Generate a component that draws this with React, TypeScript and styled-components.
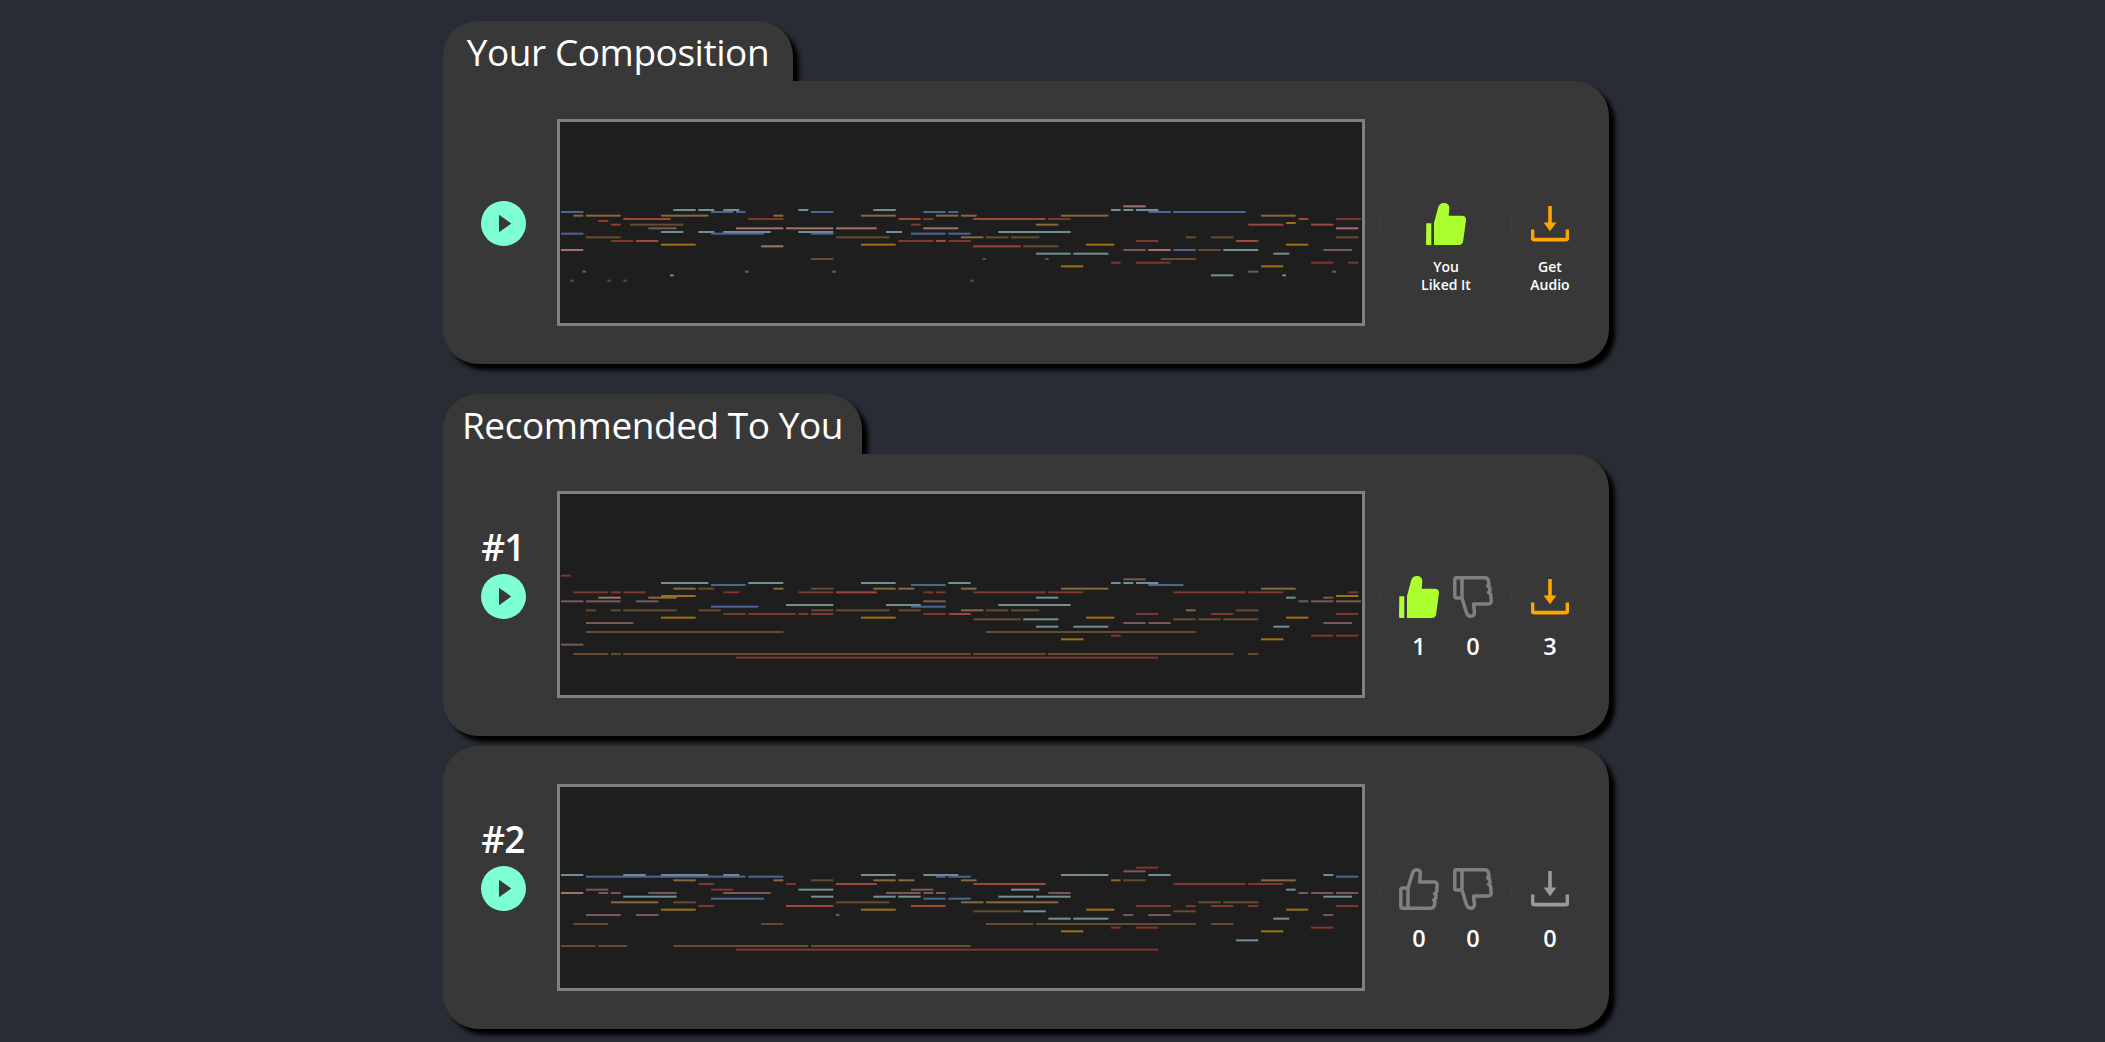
import React from "react";
import styled, { createGlobalStyle } from "styled-components";

const Global = createGlobalStyle`
  * { box-sizing: border-box; }
  html, body { margin: 0; background: #282c34; }
  body { font-family: "Open Sans", "Noto Sans", "Liberation Sans", sans-serif; color: #fff; }
`;

const Page = styled.main`
  width: 1166px;
  margin-left: 443px;
  padding: 21px 0 13px;
`;
const Section = styled.section`
  margin-bottom: 30px;
  &:last-child { margin-bottom: 0; }
`;
const Tab = styled.h2<{ $width: number }>`
  width: ${(p) => p.$width}px;
  height: 60px;
  margin: 0;
  background: #383838;
  border-radius: 35px 35px 0 0;
  box-shadow: 6px 6px 4px #000;
  font-size: 37px;
  font-weight: 400;
  line-height: 62px;
  letter-spacing: -0.45px;
  text-align: center;
  white-space: nowrap;
`;
const Panel = styled.article<{ $first?: boolean }>`
  position: relative;
  display: flex;
  align-items: center;
  height: 282.67px;
  padding-left: 6px;
  margin-top: 10px;
  background: #383838;
  border-radius: 35px;
  box-shadow: 6px 6px 4px #000;
  ${(p) => p.$first && "margin-top: 0; border-top-left-radius: 0;"}
`;
const Lead = styled.div`
  align-self: flex-start;
  width: 108px;
  padding-top: 67px;
  display: flex;
  flex-direction: column;
  align-items: center;
`;
const Rank = styled.div`
  height: 53px;
  font-size: 37px;
  font-weight: 600;
  line-height: 52px;
  letter-spacing: -0.8px;
`;
const PlayButton = styled.button`
  width: 45px;
  height: 45px;
  padding: 0;
  border: 0;
  border-radius: 50%;
  background: #7fffd4;
  display: flex;
`;
const Roll = styled.div`
  flex: none;
  width: 808px;
  height: 207px;
  border: 3px solid #808080;
  background: #1e1e1e;
`;
const RollSvg = styled.svg`
  display: block;
  filter: blur(0.45px);
`;
const Actions = styled.div`
  align-self: flex-start;
  margin-left: 29px;
  padding-top: 122px;
  display: flex;
`;
const ActionGroup = styled.div`
  width: 104px;
  display: flex;
  flex-direction: column;
  align-items: center;
`;
const Votes = styled.div`
  display: flex;
  justify-content: center;
`;
const Stat = styled.div`
  width: 54px;
  display: flex;
  flex-direction: column;
  align-items: center;
`;
const IconSlot = styled.div`
  height: 42px;
  display: flex;
  align-items: center;
  justify-content: center;
`;
const Caption = styled.div`
  margin-top: 13px;
  font-size: 14px;
  font-weight: 600;
  line-height: 18px;
  text-align: center;
  white-space: pre-line;
`;
const Count = styled.div`
  margin-top: 15px;
  font-size: 23.5px;
  font-weight: 600;
  line-height: 26px;
  text-align: center;
`;
const Rule = styled.i<{ $left: number }>`
  position: absolute;
  left: ${(p) => p.$left}px;
  top: 136px;
  width: 1px;
  height: 15px;
  background: #3e3e3e;
`;

const palette: Record<string, string> = {
  b: "#4f6d9e",
  t: "#7d989b",
  o: "#96703f",
  O: "#6b5030",
  r: "#ab4a3c",
  R: "#893a30",
  p: "#ab7a70",
  P: "#80605a",
  g: "#a9780f",
  v: "#ad3d1c",
};

type Block = { ox: number; oy: number; rows: string };

const parse = (blocks: Block[]) =>
  blocks.flatMap(({ ox, oy, rows }) =>
    rows
      .trim()
      .split("\n")
      .flatMap((line) => {
        const [y, ...rest] = line.trim().split(" ");
        return rest.map((n) => {
          const [a, b] = n.slice(1).split("-").map(Number);
          return { c: palette[n[0]], x: a / 3 + ox, w: (b - a) / 3, y: Number(y) / 3 + oy };
        });
      }),
  );

const notesOne = parse([
  {
    ox: -10,
    oy: 68,
    rows: `60 t370-437 t445-493 t520-568 t745-775 t970-1037
66 b33-100 b483-550 b558-587 b783-850 b1120-1187 b1195-1200
77 o70-100 o108-212 o333-475 o670-700 o933-1037 o1158-1200
87 r220-362 R595-700 r1045-1112 R1120-1150
93 v145-175
104 v183-212 O240-400 R1083-1112
115 P295-380 p558-700 p708-850 p858-980 p1120-1200
126 t333-400 t445-493 t520-662 t745-850 t1008-1056
131 b33-100 b483-642 b783-850 b1083-1187 b1195-1200
142 O108-212 O858-1018
153 R183-250 r258-325 R1045-1150 r1158-1187 R1195-1200
164 g333-437 g933-1037
169 p633-700
180 p33-100
207 O783-850
245 P97-108 P585-596 P847-858
256 t360-371
272 O60-71 O172-183 O220-231`,
  },
  {
    ox: 390,
    oy: 68,
    rows: `49 p520-587
60 t483-512 t520-550 t558-625
66 b0-25 b595-662 b670-887
77 o0-25 o33-80 o333-475 o933-1037
87 r70-287 R295-362 r1045-1075 R1158-1233
99 g1008-1037
104 o258-325 r895-1000 r1083-1150
115 p0-25 p1158-1225
126 t145-362
131 b0-62
142 o33-100 O108-175 O183-268 O708-737 O783-850 O1158-1225
153 R0-62 R558-625 r858-925
164 g408-493 g1008-1075
169 r70-212 O220-325
180 P520-587 p595-662 b670-737 O745-812 t820-925 P1120-1206
191 t258-362 t370-475 t970-1018
207 O97-108 O285-296 O633-737
218 R483-512 R558-662 R1083-1150 R1195-1225
229 g333-400 g933-1000
245 P895-925 P1147-1158
256 t783-850 t997-1008
272 O60-71`,
  },
]);

const notesTwo = parse([
  {
    ox: -10,
    oy: 66,
    rows: `47 R33-62
69 t333-475 t595-700 t933-1037 t1195-1200
75 b483-587 b1083-1187
86 o370-437 O445-493 o670-700 O783-850 o970-1037 o1045-1093
97 R70-175 R183-212 R220-287 R520-568 R745-850 r858-980 R1120-1150 R1158-1187
108 g333-437
113 p145-212 o295-380
124 P33-100 P108-212 P258-325 P1120-1187
135 t708-850 t1008-1112
140 b483-625 b1083-1187
151 O108-137 O183-212 O220-380 O445-512 O783-850 O858-1018 O1045-1112
162 R520-587 R595-737 R745-775 R783-850 R1120-1187 R1195-1200
173 g333-437 g933-1037
189 P108-250
216 O108-700
254 P33-100
282 O70-175 O183-212 O220-1200
293 R558-1200`,
  },
  {
    ox: 390,
    oy: 66,
    rows: `58 P520-587
69 t0-62 t483-512 t520-550 t558-625
75 b595-700
86 o33-80 o333-475 o933-1037
97 R70-287 R295-400 R670-887 R895-1000 R1195-1225
108 g1158-1225
113 t258-325 t1008-1037 P1120-1150
124 P1045-1075 P1083-1150 P1158-1233
135 t145-362
151 o33-100 O108-175 O183-268 o708-737 O858-925
162 r0-62 R558-625 R783-850 R1158-1225
173 g408-493 g1008-1075
178 O70-212 t220-325 O670-737 O745-812 O820-925
189 P520-587 P595-662 P1120-1206
200 t258-325 t370-475 t970-1018
216 O108-737
227 R483-512 R1083-1150 R1158-1225
238 g333-400 g933-1000
282 O0-62 O70-287 O295-850 O895-925
293 R0-625`,
  },
]);

const notesThree = parse([
  {
    ox: -10,
    oy: 63,
    rows: `75 t33-100 t220-287 t333-475 t520-568 t933-1037 t1120-1200
80 b108-587 b595-700 b1158-1187 b1195-1200
91 o370-437 o670-700 O783-850 o970-1037 o1045-1093
102 R445-493 R708-737 r858-980
119 P108-175 R483-550 t745-850 P1083-1150
129 p33-100 P145-175 P183-212 P295-380 P520-662 P1008-1112 P1120-1150 P1158-1187
140 t220-380 t783-850 t970-1037 t1045-1112
146 b483-642 b1120-1187 b1195-1200
157 o183-325 O370-437 O858-1018
168 R445-493 r708-850 r1083-1187
179 g333-437 g933-1037
195 P108-212 P258-325 P858-868
222 O70-175 O633-700
288 O33-137 O145-231 O370-775 O783-1200
299 R558-1200`,
  },
  {
    ox: 390,
    oy: 63,
    rows: `53 R558-625
64 P520-587
75 t0-25 t333-475 t595-662 t1120-1150
80 b0-62 b1158-1225
91 o33-80 o483-512 O520-587 o933-1037
102 r70-287 R670-887 R895-1000
119 t183-268 t1008-1037
129 P295-362 P1045-1075 P1083-1150 P1158-1225
140 t145-250 t258-362 t1120-1206
146 b0-62
157 o33-100 o108-325 O745-812 O820-925
168 R558-662 R708-737 R783-850 R895-925 R1158-1225
179 g408-493 g1008-1075
184 O70-212 t220-287 O670-737
195 P520-550 P595-662 P1120-1150
206 t295-362 t370-475 t970-1018
222 O108-250 O258-737 O783-850
233 R483-512 R558-625 R1083-1150
244 g333-400 g933-1000
271 t858-925
288 O0-62
299 R0-625`,
  },
]);

type Note = { c: string; x: number; w: number; y: number };

const PianoRoll = ({ notes }: { notes: Note[] }) => (
  <Roll>
    <RollSvg width="802" height="201" viewBox="0 0 802 201">
      {notes.map((n, i) => (
        <rect key={i} x={n.x} y={n.y - 1} width={n.w} height={2} fill={n.c} opacity={0.92} />
      ))}
    </RollSvg>
  </Roll>
);

const Play = () => (
  <PlayButton aria-label="Play">
    <svg width="45" height="45" viewBox="0 0 45 45">
      <path d="M18 13.7 L30.3 22.5 L18 31.3 Z" fill="#383838" />
    </svg>
  </PlayButton>
);

const handFilled =
  "M0.3 20.3 H5.3 V42 H1.3 Q0 42 0 40.7 Z M8 42 V20 L12 5 Q13.3 0 17.7 0 Q23.6 0 23.3 5.5 L22.7 12.7 H36 Q40.3 12.7 40 17.3 L37.2 37.7 Q36.6 42 32.7 42 Z";
const handOutline =
  "M9 40 V20 H3.7 Q1.8 20 1.8 21.9 V38.3 Q1.8 40.2 3.7 40.2 H31.5 Q35 40.2 35.5 36.8 L36 33.4 L34.6 32.2 L36.6 30.6 L37 27.2 L35.6 25.6 L37.6 24 L38.2 17.5 Q38.4 14 35 14 H20.6 L21.4 6 Q21.6 1.8 18 1.8 Q14.6 1.8 13.4 5.4 L9 20";

const Thumb = ({ down, filled }: { down?: boolean; filled?: boolean }) => (
  <svg width="41" height="42" viewBox="0 0 41 42">
    <g transform={down ? "translate(0 42) scale(1 -1)" : undefined}>
      {filled ? (
        <path d={handFilled} fill="#adff2f" />
      ) : (
        <path d={handOutline} fill="none" stroke="#808080" strokeWidth="3.5" strokeLinejoin="round" />
      )}
    </g>
  </svg>
);

const Download = ({ color }: { color: string }) => (
  <svg width="38" height="36" viewBox="0 0 38 36">
    <path d="M19 0 V18" stroke={color} strokeWidth="3.6" fill="none" />
    <path d="M12.6 16.6 H25.4 L19 25.2 Z" fill={color} />
    <path
      d="M1.5 23.6 V31.8 Q1.5 33.6 3.5 33.6 H34.5 Q36.5 33.6 36.5 31.8 V23.6"
      stroke={color}
      strokeWidth="3.7"
      fill="none"
    />
  </svg>
);

const Rules = () => (
  <>
    <Rule $left={98} />
    <Rule $left={937} />
    <Rule $left={1068} />
  </>
);

const Recommended = ({
  rank,
  notes,
  up,
  down,
  saved,
  liked,
  fetched,
  first,
}: {
  rank: string;
  notes: Note[];
  up: number;
  down: number;
  saved: number;
  liked?: boolean;
  fetched?: boolean;
  first?: boolean;
}) => (
  <Panel $first={first}>
    <Rules />
    <Lead>
      <Rank>{rank}</Rank>
      <Play />
    </Lead>
    <PianoRoll notes={notes} />
    <Actions>
      <ActionGroup>
        <Votes>
          <Stat>
            <IconSlot>
              <Thumb filled={liked} />
            </IconSlot>
            <Count>{up}</Count>
          </Stat>
          <Stat>
            <IconSlot>
              <Thumb down />
            </IconSlot>
            <Count>{down}</Count>
          </Stat>
        </Votes>
      </ActionGroup>
      <ActionGroup>
        <IconSlot>
          <Download color={fetched ? "#ffa500" : "#9a9a9a"} />
        </IconSlot>
        <Count>{saved}</Count>
      </ActionGroup>
    </Actions>
  </Panel>
);

export default function App() {
  return (
    <Page>
      <Global />
      <Section>
        <Tab $width={350}>Your Composition</Tab>
        <Panel $first>
          <Rules />
          <Lead>
            <Rank />
            <Play />
          </Lead>
          <PianoRoll notes={notesOne} />
          <Actions>
            <ActionGroup>
              <IconSlot>
                <Thumb filled />
              </IconSlot>
              <Caption>{"You\nLiked It"}</Caption>
            </ActionGroup>
            <ActionGroup>
              <IconSlot>
                <Download color="#ffa500" />
              </IconSlot>
              <Caption>{"Get\nAudio"}</Caption>
            </ActionGroup>
          </Actions>
        </Panel>
      </Section>
      <Section>
        <Tab $width={419}>Recommended To You</Tab>
        <Recommended first rank="#1" notes={notesTwo} up={1} down={0} saved={3} liked fetched />
        <Recommended rank="#2" notes={notesThree} up={0} down={0} saved={0} />
      </Section>
    </Page>
  );
}
